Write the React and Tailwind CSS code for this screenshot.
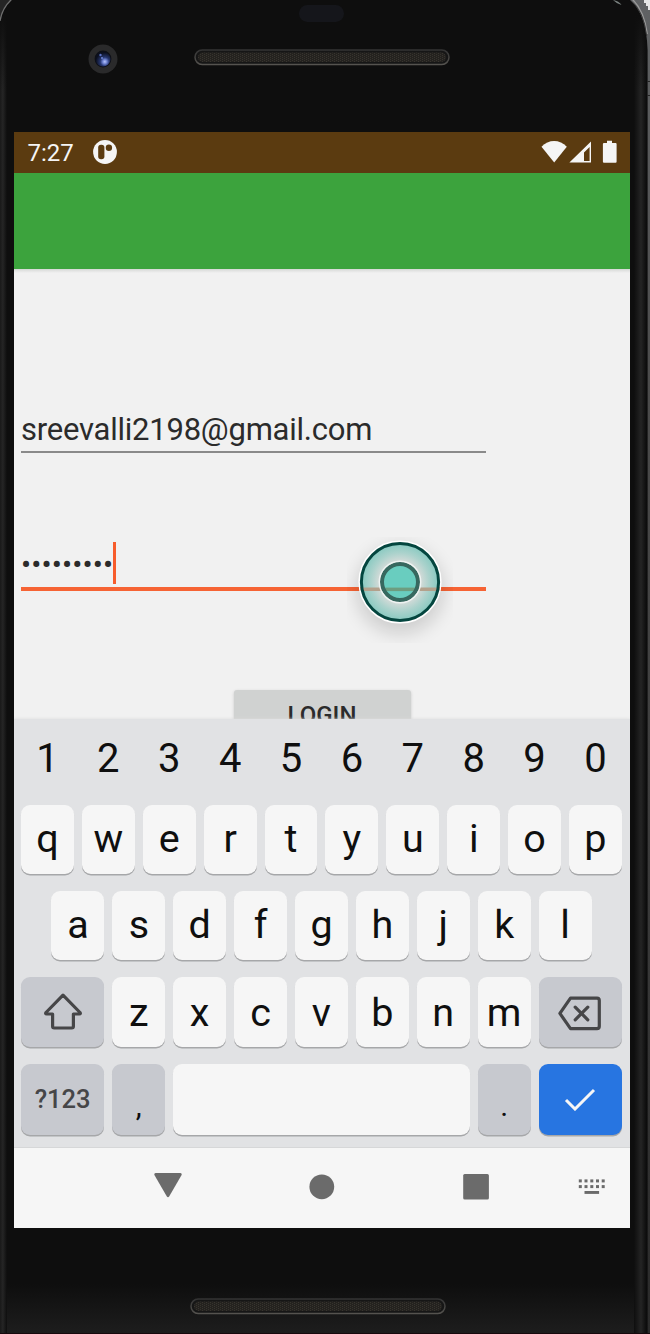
import React from 'react';

function Key({ children, className = '', shift = 'pb-[1px]' }) {
  return (
    <div
      className={`flex items-center justify-center rounded-[9px] shadow-[0_1.5px_0_#a6a7a9] ${shift} ${className}`}
    >
      {children}
    </div>
  );
}

const letter = 'w-[52.9px] shrink-0 bg-[#f6f6f6] text-[39.5px] leading-none text-[#0f0f0f]';
const grey = 'bg-[#c7c9cf]';

function Speaker() {
  return (
    <svg width="256" height="17" viewBox="0 0 256 17" className="block">
      <defs>
        <pattern id="mesh" width="4" height="2" patternUnits="userSpaceOnUse">
          <rect width="4" height="2" fill="#24221f" />
          <rect width="1" height="1" fill="#38352f" />
          <rect x="2" y="1" width="1" height="1" fill="#36332d" />
        </pattern>
        <linearGradient id="rim" x1="0" y1="0" x2="0" y2="1">
          <stop offset="0" stopColor="#333333" />
          <stop offset="1" stopColor="#55534f" />
        </linearGradient>
      </defs>
      <rect x="1" y="1" width="254" height="14.5" rx="7.2" fill="#161616" stroke="url(#rim)" strokeWidth="1.5" />
      <rect x="4" y="3.5" width="248" height="9.5" rx="4.7" fill="url(#mesh)" />
    </svg>
  );
}

function Camera() {
  return (
    <svg width="30" height="30" viewBox="0 0 30 30" className="block">
      <defs>
        <radialGradient id="lens" cx="0.62" cy="0.68" r="0.6">
          <stop offset="0" stopColor="#b8c6ff" />
          <stop offset="0.25" stopColor="#6c80cf" />
          <stop offset="0.5" stopColor="#26366f" />
          <stop offset="1" stopColor="#0b0f1e" />
        </radialGradient>
      </defs>
      <circle cx="15" cy="15" r="14.5" fill="#2a2a2b" />
      <circle cx="15" cy="15" r="8.4" fill="#0d0f16" />
      <circle cx="15" cy="15" r="7.5" fill="url(#lens)" />
      <circle cx="12.5" cy="11" r="1.2" fill="#5870c4" />
      <circle cx="14" cy="14" r="1" fill="#7087d8" />
    </svg>
  );
}

function StatusBar() {
  return (
    <div className="flex h-[41px] shrink-0 items-center bg-[#5b3b10] pb-[1px] text-[#f5f5f5]">
      <span className="ml-[13.5px] w-[65px] pt-[2px] text-[24px] leading-none">7:27</span>
      <svg width="24" height="24" viewBox="0 0 24 24" className="block">
        <circle cx="12" cy="12" r="11.9" fill="#f5f5f5" />
        <rect x="5.2" y="4.7" width="6.2" height="14.6" rx="2.8" fill="#5b3b10" />
        <circle cx="15.9" cy="7.7" r="3.2" fill="#5b3b10" />
      </svg>
      <svg width="76" height="24" viewBox="0 0 76 24" className="ml-auto mr-[13px] block" fill="#f5f5f5">
        <path d="M0.5 6.8C7.5-0.9 18.7-0.9 25.8 6.8L13.2 22.5Z" />
        <path fillRule="evenodd" d="M50 1.5V22.6H28.4ZM48.6 7L43 12.4V20.9H48.6Z" />
        <path d="M66 .8H71V3H74.6Q75.6 3 75.6 4V21.7Q75.6 22.8 74.6 22.8H63Q61.9 22.8 61.9 21.7V4Q61.9 3 63 3H66Z" />
      </svg>
    </div>
  );
}

function TouchMarker() {
  return (
    <svg width="140" height="150" viewBox="0 0 140 150" className="pointer-events-none absolute left-[316px] top-[245px]">
      <defs>
        <radialGradient id="ring" cx="0.5" cy="0.5" r="0.5">
          <stop offset="0.5" stopColor="#d9dcda" />
          <stop offset="0.75" stopColor="#abd2cc" />
          <stop offset="1" stopColor="#86c9c0" />
        </radialGradient>
        <filter id="soft" x="-50%" y="-50%" width="200%" height="200%">
          <feGaussianBlur stdDeviation="9" />
        </filter>
        <mask id="outside">
          <rect width="140" height="150" fill="white" />
          <circle cx="70" cy="68" r="40" fill="black" />
        </mask>
      </defs>
      <g mask="url(#outside)">
        <circle cx="70" cy="76" r="44" fill="#000" opacity="0.14" filter="url(#soft)" />
      </g>
      <circle cx="70" cy="68" r="39" fill="url(#ring)" />
      <path d="M32 73.6H108V77.1H32Z" fill="#b3a18c" />
      <circle cx="70" cy="68" r="40.8" fill="none" stroke="#ffffff" strokeWidth="1.6" />
      <circle cx="70" cy="68" r="38.6" fill="none" stroke="#04463f" strokeWidth="3" />
      <circle cx="70" cy="68" r="17" fill="#69cdbf" />
      <path d="M54 73.6H86V77.1H54Z" fill="#6d9d80" />
      <circle cx="70" cy="68" r="18" fill="none" stroke="#37685f" strokeWidth="4" />
      <circle cx="70" cy="68" r="20.7" fill="none" stroke="#eef3f2" strokeWidth="1.4" />
    </svg>
  );
}

function LoginForm() {
  return (
    <div className="relative flex h-[450px] shrink-0 flex-col overflow-hidden bg-[#f1f1f1] pl-[7px]">
      <div className="-ml-[7px] h-[4px] shrink-0 bg-linear-to-b from-[#d6d8d6] to-[#f1f1f1]" />
      <div className="mt-[136px] flex h-[44px] w-[465px] shrink-0 items-center border-b-2 border-[#8a8a8a] pb-[2px]">
        <span className="whitespace-nowrap text-[31px] leading-none tracking-[-0.23px] text-[#2b2b2b]">sreevalli2198@gmail.com</span>
      </div>
      <div className="mt-[89px] flex h-[49px] w-[465px] shrink-0 items-start border-b-4 border-[#f66334]">
        <span className="mt-[5px] text-[30px] leading-[36px] tracking-[0.12px] text-[#2b2b2b]">•••••••••</span>
        <div className="h-[42px] w-[3px] bg-[#f75c2c]" />
      </div>
      <div className="ml-[212.5px] mt-[99px] flex h-[60px] w-[177px] shrink-0 justify-center rounded-[3px] bg-[#d0d2d1] pt-[12.5px] text-[24px] font-medium leading-[24px] text-[#2b2b2b] shadow-[0_1px_3px_#c5c5c5]">
        LOGIN
      </div>
      <TouchMarker />
    </div>
  );
}

function Keyboard() {
  return (
    <div className="flex h-[428px] shrink-0 flex-col bg-[#e1e2e4] pl-[7px] pr-[8px] shadow-[0_0_3px_#dcdddd]">
      <div className="flex h-[86px] shrink-0 gap-[8px] pb-[6px]">
        {'1234567890'.split('').map((c) => (
          <div key={c} className="flex w-[52.9px] shrink-0 items-center justify-center text-[40px] leading-none text-[#0f0f0f]">
            {c}
          </div>
        ))}
      </div>
      <div className="flex h-[68.5px] shrink-0 gap-[8px]">
        {'qwertyuiop'.split('').map((c) => (
          <Key key={c} className={letter}>{c}</Key>
        ))}
      </div>
      <div className="mt-[17.5px] flex h-[69px] shrink-0 justify-center gap-[8px]">
        {'asdfghjkl'.split('').map((c) => (
          <Key key={c} className={letter}>{c}</Key>
        ))}
      </div>
      <div className="mt-[17px] flex h-[69.5px] shrink-0 gap-[8px]">
        <Key className={`w-[83.3px] ${grey}`} shift="pb-0">
          <svg width="40" height="38" viewBox="0 0 40 38" fill="none" stroke="#464648" strokeWidth="3.2" strokeLinejoin="round">
            <path d="M20 2.2L37 19.5Q38 21 36.3 21H30.4V33.3Q30.4 35 28.7 35H11.3Q9.6 35 9.6 33.3V21H3.7Q2 21 3 19.5Z" />
          </svg>
        </Key>
        {'zxcvbnm'.split('').map((c) => (
          <Key key={c} className={letter} shift="pt-[1px]">{c}</Key>
        ))}
        <Key className={`w-[83.3px] ${grey}`} shift="pt-[4px]">
          <svg width="44" height="36" viewBox="0 0 44 36" fill="none" stroke="#464648" strokeWidth="3.2" strokeLinejoin="round">
            <path d="M12.5 2.1H39Q41.3 2.1 41.3 4.4V30.3Q41.3 32.6 39 32.6H12.5L1.9 17.4Z" />
            <path d="M17.2 11.2L29.8 23.8M29.8 11.2L17.2 23.8" strokeLinecap="round" />
          </svg>
        </Key>
      </div>
      <div className="mt-[17px] flex h-[71px] shrink-0 gap-[8px]">
        <Key className={`w-[83.3px] text-[25.5px] font-medium leading-none text-[#464648] ${grey}`} shift="pt-[2px]">?123</Key>
        <Key className="w-[52.9px] bg-[#c7c9cf] text-[30px] leading-none text-[#0f0f0f]" shift="pt-[13px]">,</Key>
        <Key className="flex-1 bg-[#f6f6f6]" />
        <Key className="w-[52.9px] bg-[#c7c9cf] text-[30px] leading-none text-[#0f0f0f]" shift="pt-[13px]">.</Key>
        <Key className="w-[83.3px] bg-[#2775e1]" shift="pb-0">
          <svg width="32" height="24" viewBox="0 0 32 24" fill="none" stroke="#f6f6f6" strokeWidth="3">
            <path d="M2 13L11 22L30 3" />
          </svg>
        </Key>
      </div>
    </div>
  );
}

function NavBar() {
  return (
    <div className="flex h-[81px] shrink-0 border-t border-[#d6d7d8] bg-[#f6f6f6]">
      <svg width="616" height="80" viewBox="0 0 616 80" fill="#6b6b6b" className="block">
        <path d="M141.5 25H166.5Q168.3 25.3 167.6 27L155.3 48.3Q154 50 152.7 48.3L140.4 27Q139.7 25.3 141.5 25Z" />
        <circle cx="307.8" cy="38.8" r="12.4" />
        <rect x="449.2" y="26" width="25.7" height="25.6" rx="1.5" />
        <g>
          {[564.8, 570.5, 576.3, 582, 587.7].map((x) => (
            <React.Fragment key={x}>
              <rect x={x} y="31.4" width="3" height="3" />
              <rect x={x} y="37.1" width="3" height="3" />
            </React.Fragment>
          ))}
          <rect x="570.5" y="43" width="14.6" height="2.9" />
        </g>
      </svg>
    </div>
  );
}

function Bezel() {
  return (
    <svg width="650" height="1334" viewBox="0 0 650 1334" className="pointer-events-none absolute left-0 top-0">
      <defs>
        <linearGradient id="leftEdge" x1="0" y1="0" x2="1" y2="0">
          <stop offset="0" stopColor="#191919" />
          <stop offset="0.4" stopColor="#252525" />
          <stop offset="1" stopColor="#0e0e0e" />
        </linearGradient>
        <linearGradient id="rightEdge" x1="0" y1="0" x2="1" y2="0">
          <stop offset="0" stopColor="#0e0e0e" />
          <stop offset="0.5" stopColor="#242424" />
          <stop offset="0.82" stopColor="#101010" />
          <stop offset="1" stopColor="#080808" />
        </linearGradient>
        <linearGradient id="metal" x1="0" y1="0" x2="0" y2="1">
          <stop offset="0" stopColor="#606264" />
          <stop offset="0.3" stopColor="#4b4b4b" />
          <stop offset="1" stopColor="#2b2b2b" />
        </linearGradient>
        <linearGradient id="base" x1="0" y1="0" x2="0" y2="1">
          <stop offset="0" stopColor="#0e0e0e" />
          <stop offset="1" stopColor="#1d1d1d" />
        </linearGradient>
        <linearGradient id="fade" x1="0" y1="0" x2="0" y2="90" gradientUnits="userSpaceOnUse">
          <stop offset="0.15" stopColor="#0e0e0e" />
          <stop offset="1" stopColor="#0e0e0e" stopOpacity="0" />
        </linearGradient>
      </defs>
      <rect x="0" y="1284" width="650" height="49" fill="url(#base)" />
      <rect x="0" y="0" width="7" height="1334" fill="url(#leftEdge)" />
      <rect x="634" y="0" width="14" height="1334" fill="url(#rightEdge)" />
      <rect x="0" y="0" width="650" height="90" fill="url(#fade)" />
      <path d="M0 0H11Q2 8 0 19Z" fill="#252525" />
      <path d="M12 -1Q2 8 0 21" fill="none" stroke="#6f6f6f" strokeWidth="1.3" />
      <path d="M630 0Q646.5 14 647.6 50V1334H650V0Z" fill="url(#metal)" />
      <path d="M632 -1Q644 10 647.3 34" fill="none" stroke="#999999" strokeWidth="1.4" />
      <path d="M630 0Q644 11 646.6 36" fill="none" stroke="#333333" strokeWidth="1" />
      <path d="M644 0H650V10H648V6H646V3H644Z" fill="#e6e6e6" />
      <path d="M613 0Q619 1 621.5 5Q617 4 613 0Z" fill="#7c8482" />
      <rect x="647" y="81" width="3" height="1" fill="#252525" />
      <rect x="647" y="95" width="3" height="1" fill="#252525" />
      <rect x="0" y="1333" width="650" height="1" fill="#17090d" />
    </svg>
  );
}

export default function App() {
  return (
    <div className="relative flex h-[1334px] w-[650px] flex-col overflow-hidden bg-[#0e0e0e] font-['Roboto',sans-serif]">
      <Bezel />
      <div className="relative flex h-[132px] shrink-0 flex-col">
        <div className="ml-[299px] mt-[5px] h-[17px] w-[45px] shrink-0 rounded-full bg-[#15161b]" />
        <div className="mt-[22px] flex">
          <div className="ml-[88px]">
            <Camera />
          </div>
          <div className="ml-[76px] mt-[5px]">
            <Speaker />
          </div>
        </div>
      </div>
      <div className="relative ml-[14px] flex h-[1096px] w-[616px] shrink-0 flex-col overflow-hidden">
        <StatusBar />
        <div className="h-[96px] shrink-0 bg-[#3ca33d]" />
        <LoginForm />
        <div className="relative flex flex-col">
          <Keyboard />
          <NavBar />
        </div>
      </div>
      <div className="relative ml-[190px] mt-[70px]">
        <Speaker />
      </div>
    </div>
  );
}
